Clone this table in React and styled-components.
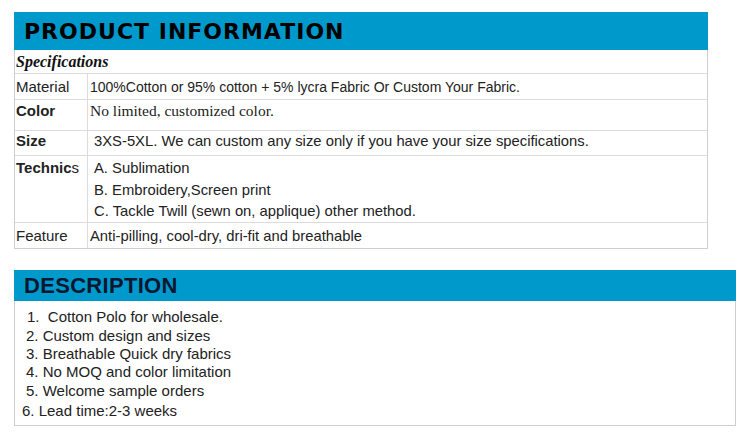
import React from "react";
import styled, { createGlobalStyle } from "styled-components";

const Global = createGlobalStyle`
  html, body { margin: 0; padding: 0; background: #fff; }
  body { font-family: "Liberation Sans", Arial, sans-serif; color: #222; }
`;

const Page = styled.div`
  width: 745px;
  height: 432px;
  padding: 12px 0 0 14px;
  box-sizing: border-box;
  display: flex;
  flex-direction: column;
  gap: 21px;
`;

const Section = styled.section`
  width: ${(p) => p.$width}px;
  box-sizing: border-box;
  border: 1px solid #cfcfcf;
  border-top: none;
  display: flex;
  flex-direction: column;
`;

const Header = styled.div`
  height: ${(p) => p.$height}px;
  margin: 0 -1px;
  background: #0099cc;
  display: flex;
  align-items: center;
  padding-left: ${(p) => p.$pad}px;
  font-family: ${(p) =>
    p.$wide
      ? '"DejaVu Sans", Verdana, sans-serif'
      : '"Liberation Sans", Arial, sans-serif'};
  font-weight: bold;
  font-size: ${(p) => p.$size}px;
  letter-spacing: ${(p) => p.$ls}px;
  color: ${(p) => p.$color};
`;

const SpecTitle = styled.div`
  height: 24px;
  box-sizing: border-box;
  border-bottom: 1px solid #dcdcdc;
  display: flex;
  align-items: center;
  padding-left: 1px;
  font-family: "Liberation Serif", "Times New Roman", serif;
  font-style: italic;
  font-weight: bold;
  font-size: 16px;
  color: #111;
`;

const Row = styled.div`
  display: grid;
  grid-template-columns: 73px 1fr;
  height: ${(p) => p.$h}px;
  box-sizing: border-box;
  border-bottom: ${(p) => (p.$last ? "none" : "1px solid #dcdcdc")};
`;

const Label = styled.div`
  border-right: 1px solid #dcdcdc;
  padding: ${(p) => p.$top}px 0 0 1px;
  font-size: 15px;
  font-weight: ${(p) => (p.$bold ? "bold" : "normal")};
  color: #222;
  line-height: 18px;
  white-space: nowrap;
`;

const Normal = styled.span`
  font-weight: normal;
`;

const Value = styled.div`
  padding: ${(p) => p.$top}px 0 0 ${(p) => p.$left}px;
  font-family: ${(p) =>
    p.$serif
      ? '"Liberation Serif", "Times New Roman", serif'
      : '"Liberation Sans", Arial, sans-serif'};
  font-size: ${(p) => p.$size}px;
  color: #222;
  line-height: 18px;
  white-space: nowrap;
`;

const Line = styled.div`
  height: ${(p) => p.$h}px;
`;

const List = styled.div`
  padding: 6px 0 4px;
  display: flex;
  flex-direction: column;
`;

const Item = styled.div`
  padding-left: ${(p) => p.$indent}px;
  height: ${(p) => p.$h}px;
  line-height: ${(p) => p.$h}px;
  font-size: 15px;
  color: #222;
  white-space: pre;
`;

const items = [
  { t: "1.  Cotton Polo for wholesale.", i: 12, h: 19 },
  { t: "2. Custom design and sizes", i: 11, h: 19 },
  { t: "3. Breathable Quick dry fabrics", i: 11, h: 18 },
  { t: "4. No MOQ and color limitation", i: 11, h: 18 },
  { t: "5. Welcome sample orders", i: 11, h: 19 },
  { t: "6. Lead time:2-3 weeks", i: 7, h: 21 },
];

export default function App() {
  return (
    <>
      <Global />
      <Page>
        <Section $width={694}>
          <Header $height={38} $pad={10} $size={22} $ls={1} $color="#000" $wide>
            PRODUCT INFORMATION
          </Header>
          <SpecTitle>Specifications</SpecTitle>
          <Row $h={26}>
            <Label $top={4}>Material</Label>
            <Value $top={4} $left={2} $size={14}>
              100%Cotton or 95% cotton + 5% lycra Fabric Or Custom Your Fabric.
            </Value>
          </Row>
          <Row $h={31}>
            <Label $top={2} $bold>
              Color
            </Label>
            <Value $top={2} $left={2} $size={15.5} $serif>
              No limited, customized color.
            </Value>
          </Row>
          <Row $h={25}>
            <Label $top={1} $bold>
              Size
            </Label>
            <Value $top={1} $left={6} $size={14.8}>
              3XS-5XL. We can custom any size only if you have your size
              specifications.
            </Value>
          </Row>
          <Row $h={67}>
            <Label $top={3} $bold>
              Technic<Normal>s</Normal>
            </Label>
            <Value $top={3} $left={6} $size={14.8}>
              <Line $h={22}>A. Sublimation</Line>
              <Line $h={21}>B. Embroidery,Screen print</Line>
              <Line $h={18}>C. Tackle Twill (sewn on, applique) other method.</Line>
            </Value>
          </Row>
          <Row $h={25} $last>
            <Label $top={4}>Feature</Label>
            <Value $top={4} $left={2} $size={14.8}>
              Anti-pilling, cool-dry, dri-fit and breathable
            </Value>
          </Row>
        </Section>
        <Section $width={722}>
          <Header $height={31} $pad={10} $size={22} $ls={0.3} $color="#0b1630">
            DESCRIPTION
          </Header>
          <List>
            {items.map((it) => (
              <Item key={it.t} $indent={it.i} $h={it.h}>
                {it.t}
              </Item>
            ))}
          </List>
        </Section>
      </Page>
    </>
  );
}
